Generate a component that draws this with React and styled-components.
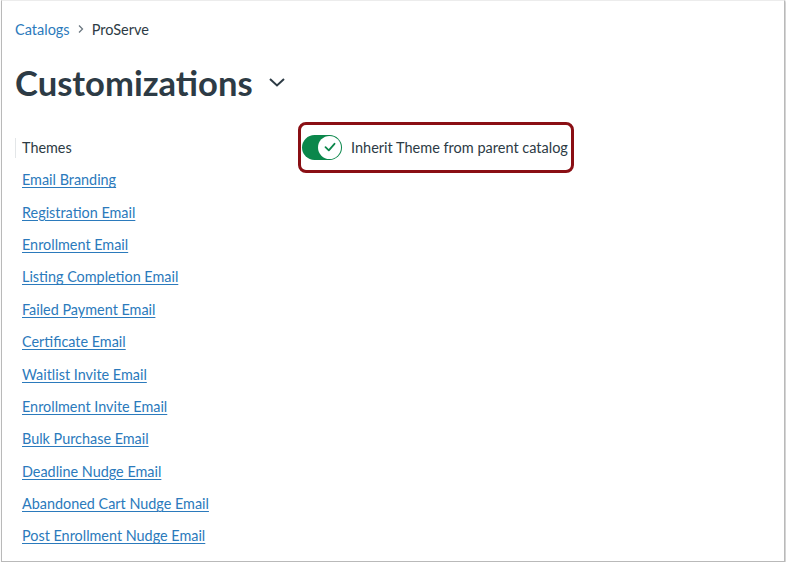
import React from "react";
import styled, { createGlobalStyle } from "styled-components";

const Global = createGlobalStyle`
  html, body { margin: 0; padding: 0; background: #ffffff; }
  body { font-family: Lato, "Open Sans", sans-serif; color: #2d3b45; }
`;

const Frame = styled.div`
  box-sizing: border-box;
  margin-left: 1px;
  width: 784px;
  height: 562px;
  border: 1px solid #b9b9b9;
  border-top-color: #ececec;
  box-shadow: 1px 1px 2px rgba(0, 0, 0, 0.25);
  padding: 18px 0 0 13px;
  background: #fff;
`;

const Crumbs = styled.nav`
  display: flex;
  align-items: center;
  gap: 6px;
  font-size: 14.5px;
  height: 22px;
  margin-top: -1px;
`;

const CrumbLink = styled.a`
  color: #2b7abc;
  text-decoration: none;
`;

const CrumbCurrent = styled.span`
  color: #2d3b45;
`;

const TitleRow = styled.div`
  display: flex;
  align-items: center;
  gap: 15px;
  margin-top: 19px;
  height: 46px;
`;

const Title = styled.h1`
  margin: 0;
  font-size: 34.6px;
  font-weight: 700;
  color: #2d3b45;
  letter-spacing: 0;
`;

const Body = styled.div`
  display: grid;
  grid-template-columns: 283px 1fr;
  margin-top: 26.5px;
`;

const SideNav = styled.ul`
  list-style: none;
  margin: 0;
  padding: 0;
`;

const NavItem = styled.li`
  height: 32.4px;
  display: flex;
  align-items: center;
  padding-left: 6px;
  font-size: 14.4px;
  border-left: 1px solid ${(p) => (p.$active ? "#e3e6e8" : "transparent")};
  ${(p) => p.$active && "height: 20px; margin: 6px 0 6px;"}
`;

const NavLink = styled.a`
  color: #2b7abc;
  text-decoration: underline;
  text-underline-offset: 2px;
`;

const ActiveLabel = styled.span`
  color: #2d3b45;
`;

const Highlight = styled.div`
  display: inline-flex;
  align-items: center;
  gap: 9px;
  box-sizing: border-box;
  height: 51px;
  width: 276px;
  border: 3px solid #8a0f14;
  border-radius: 8px;
  padding: 0 0 0 1px;
  margin-top: -10px;
`;

const Track = styled.span`
  position: relative;
  display: inline-block;
  width: 40px;
  height: 25px;
  border-radius: 13px;
  background: #0b874b;
`;

const Knob = styled.span`
  position: absolute;
  right: 1px;
  top: 1px;
  width: 23px;
  height: 23px;
  border-radius: 50%;
  background: #fff;
  display: flex;
  align-items: center;
  justify-content: center;
`;

const ToggleLabel = styled.span`
  font-size: 14.5px;
  color: #2d3b45;
`;

const links = [
  "Email Branding",
  "Registration Email",
  "Enrollment Email",
  "Listing Completion Email",
  "Failed Payment Email",
  "Certificate Email",
  "Waitlist Invite Email",
  "Enrollment Invite Email",
  "Bulk Purchase Email",
  "Deadline Nudge Email",
  "Abandoned Cart Nudge Email",
  "Post Enrollment Nudge Email",
];

export default function App() {
  return (
    <>
      <Global />
      <Frame>
        <Crumbs>
          <CrumbLink href="#">Catalogs</CrumbLink>
          <svg width="10" height="10" viewBox="0 0 10 10">
            <path d="M3 1.5 L6.5 5 L3 8.5" fill="none" stroke="#6b7780" strokeWidth="1.3" />
          </svg>
          <CrumbCurrent>ProServe</CrumbCurrent>
        </Crumbs>
        <TitleRow>
          <Title>Customizations</Title>
          <svg width="18" height="12" viewBox="0 0 18 12">
            <path d="M2 3 L9 9.5 L16 3" fill="none" stroke="#2d3b45" strokeWidth="2" />
          </svg>
        </TitleRow>
        <Body>
          <SideNav>
            <NavItem $active>
              <ActiveLabel>Themes</ActiveLabel>
            </NavItem>
            {links.map((l) => (
              <NavItem key={l}>
                <NavLink href="#">{l}</NavLink>
              </NavItem>
            ))}
          </SideNav>
          <div>
            <Highlight>
              <Track>
                <Knob>
                  <svg width="16" height="16" viewBox="0 0 16 16">
                    <path d="M3.5 8.2 L6.8 11.3 L12.5 4.8" fill="none" stroke="#0b874b" strokeWidth="1.8" strokeLinecap="round" strokeLinejoin="round" />
                  </svg>
                </Knob>
              </Track>
              <ToggleLabel>Inherit Theme from parent catalog</ToggleLabel>
            </Highlight>
          </div>
        </Body>
      </Frame>
    </>
  );
}
